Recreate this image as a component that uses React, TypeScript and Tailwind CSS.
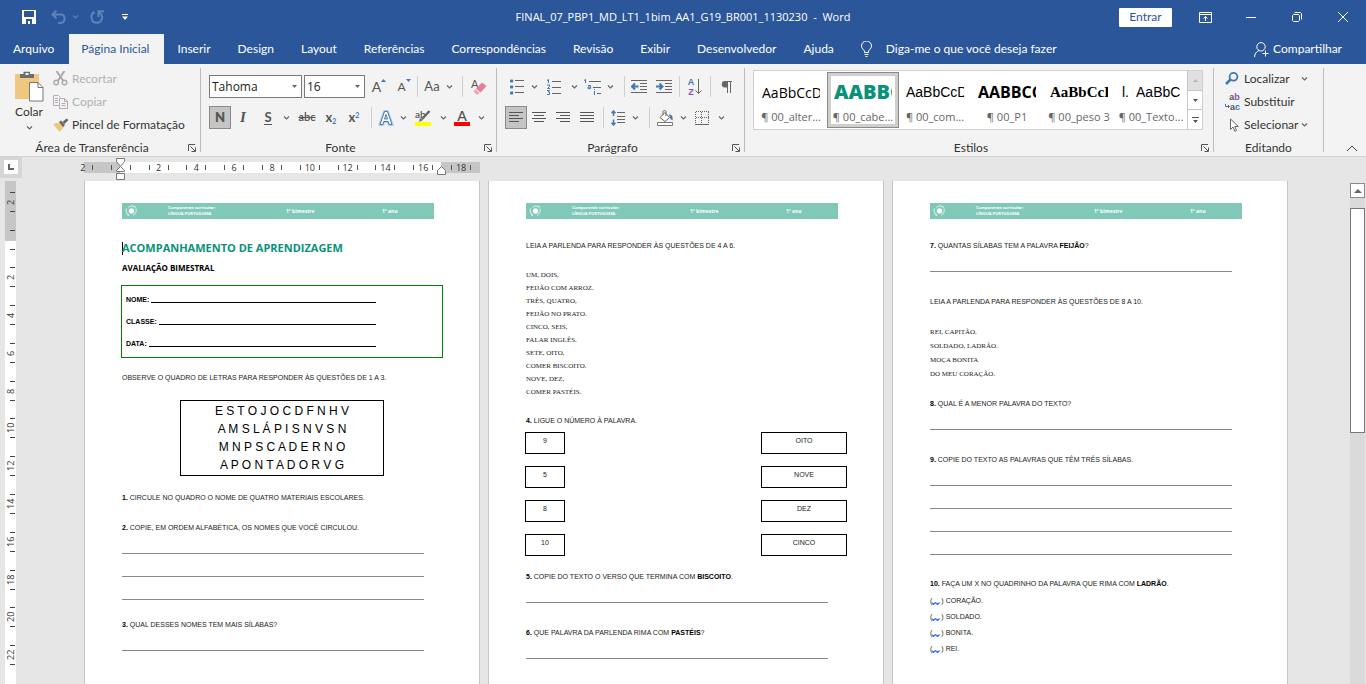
import type { ReactNode } from 'react';
import { clsx } from 'clsx';

const TABS = [
  'Arquivo',
  'Página Inicial',
  'Inserir',
  'Design',
  'Layout',
  'Referências',
  'Correspondências',
  'Revisão',
  'Exibir',
  'Desenvolvedor',
  'Ajuda',
];

const STYLES = [
  { name: '¶ 00_alter...', sample: 'AaBbCcDd', font: "font-['Open_Sans'] text-[14px] text-black" },
  { name: '¶ 00_cabe...', sample: 'AABBC', font: "font-['Open_Sans'] text-[20px] font-extrabold text-[#0a9278]", active: true },
  { name: '¶ 00_com...', sample: 'AaBbCcDd', font: "font-['Liberation_Sans'] text-[14px] text-black" },
  { name: '¶ 00_P1', sample: 'AABBCC', font: "font-['Open_Sans'] text-[16px] font-bold text-black" },
  { name: '¶ 00_peso 3', sample: 'AaBbCcDd', font: "font-['Liberation_Serif'] text-[15px] font-bold text-black" },
  { name: '¶ 00_Texto...', sample: 'l.  AaBbCc', font: "font-['Liberation_Sans'] text-[14px] text-black" },
];

const H_RULER = [-2, 0, 2, 4, 6, 8, 10, 12, 14, 16, 18];
const V_RULER = [-2, 0, 2, 4, 6, 8, 10, 12, 14, 16, 18, 20, 22];

/* ---------- small shared pieces ---------- */

function Chevron({ className = 'text-[#666]' }: { className?: string }) {
  return (
    <svg width="7" height="4" viewBox="0 0 7 4" fill="none" stroke="currentColor" className={className}>
      <path d="M1 .5 3.5 3 6 .5" strokeWidth="1.2" />
    </svg>
  );
}

function ChevronButton({ label }: { label: string }) {
  return (
    <button aria-label={label} className="grid h-[23px] w-[10px] place-items-center">
      <Chevron />
    </button>
  );
}

function Tool({ label, width, active, children }: { label: string; width: string; active?: boolean; children: ReactNode }) {
  return (
    <button
      aria-label={label}
      className={clsx(
        'grid h-[23px] shrink-0 place-items-center text-[#555]',
        width,
        active && 'border border-[#8a8a8a] bg-[#c5c5c5]',
      )}
    >
      {children}
    </button>
  );
}

function Sep({ className }: { className?: string }) {
  return <div className={clsx('mx-[2px] h-[21px] w-px shrink-0 bg-[#cfcfcf]', className)} />;
}

function GroupDivider() {
  return <div className="my-1 w-px shrink-0 bg-[#bdbdbd]" />;
}

function Launcher() {
  return (
    <button aria-label="Mais opções" className="absolute right-1 top-[4px]">
      <svg width="8" height="8" viewBox="0 0 8 8" fill="none" stroke="#555">
        <path d="M.5 7V.5H7M2.5 2.5 7 7M7.5 3.5v4h-4" />
      </svg>
    </button>
  );
}

function Group({ title, className, launcher, children }: { title: string; className: string; launcher?: boolean; children: ReactNode }) {
  return (
    <section className={clsx('flex flex-col', className)}>
      <div className="flex-1">{children}</div>
      <div className={clsx('relative h-4 text-center leading-4 text-[#333]', launcher && 'pr-4')}>
        {title}
        {launcher && <Launcher />}
      </div>
    </section>
  );
}

function Combo({ label, value, width }: { label: string; value: string; width: string }) {
  return (
    <div className={clsx('relative', width)}>
      <select
        aria-label={label}
        className="h-[23px] w-full appearance-none border border-[#7a7a7a] bg-white pl-[2px] font-['Open_Sans'] text-[12px] text-[#222]"
      >
        <option>{value}</option>
      </select>
      <svg width="5" height="3" viewBox="0 0 5 3" className="pointer-events-none absolute right-[5px] top-[10px]">
        <path d="M0 0h5L2.5 3z" fill="#666" />
      </svg>
    </div>
  );
}

/* ---------- icons ---------- */

function AlignIcon({ rows }: { rows: [number, number][] }) {
  return (
    <svg width="14" height="12" viewBox="0 0 14 12" stroke="#555" shapeRendering="crispEdges">
      {rows.map(([a, b], i) => (
        <path key={i} d={`M${a} ${i * 3 + 0.5}H${b}`} />
      ))}
    </svg>
  );
}

function BulletsIcon() {
  return (
    <svg width="14" height="16" viewBox="0 0 14 16">
      {[2, 8, 14].map((y) => (
        <g key={y}>
          <rect x="0" y={y - 1.5} width="3.2" height="3" rx="1" fill="#3f78b5" />
          <path d={`M5 ${y - 0.5}h9`} stroke="#666" />
        </g>
      ))}
    </svg>
  );
}

function NumbersIcon() {
  return (
    <svg width="14" height="16" viewBox="0 0 14 16" fill="none">
      <path d="M5 2.5h9M5 8.5h9M5 14.5h9" stroke="#666" />
      <path d="M0 1.5 1.5.5V4M0 6h2.5v1.5L.5 9.5H3M0 11.5h2.5L1.2 13H2.5v2.5H0" stroke="#3f78b5" />
    </svg>
  );
}

function MultilevelIcon() {
  return (
    <svg width="17" height="16" viewBox="0 0 17 16" fill="none">
      <path d="M5 2.5h12M9 8.5h8M13 14.5h4" stroke="#666" />
      <path d="M0 1.5 1.5.5V4M4 6.5h2.5v3.2H4V8h2.5M10.5 12v4M10.5 10v1" stroke="#3f78b5" />
    </svg>
  );
}

function IndentIcon({ outdent }: { outdent?: boolean }) {
  return (
    <svg width="16" height="13" viewBox="0 0 16 13" fill="none">
      <path d="M0 .5h16M9 3.5h7M9 6.5h7M9 9.5h7M0 12.5h16" stroke="#666" />
      <path d={outdent ? 'M7.5 6.5H1M4 3.5l-3 3 3 3' : 'M0 6.5h6.5M3.5 3.5l3 3-3 3'} stroke="#3f78b5" strokeWidth="2" />
    </svg>
  );
}

function SortIcon() {
  return (
    <span className="flex items-center gap-px font-['Liberation_Sans']">
      <span className="flex flex-col text-[9px] leading-[10px] font-bold">
        <span className="text-[#3f78b5]">A</span>
        <span className="text-[#8a4fb0]">Z</span>
      </span>
      <svg width="7" height="16" viewBox="0 0 7 16" fill="none" stroke="#666">
        <path d="M3.5 0v14.5M.5 11.5l3 3 3-3" />
      </svg>
    </span>
  );
}

function SpacingIcon() {
  return (
    <svg width="14" height="16" viewBox="0 0 14 16" fill="none">
      <path d="M6 2.5h8M6 6.5h8M6 9.5h8M6 12.5h8" stroke="#666" />
      <path d="M2.5 1v5M.5 3.2l2-2.2 2 2.2M2.5 9.5V15M.5 12.8l2 2.2 2-2.2" stroke="#3f78b5" strokeWidth="1.5" />
    </svg>
  );
}

function FillIcon() {
  return (
    <svg width="17" height="16" viewBox="0 0 17 16" fill="none">
      <path d="M3 7.5 8 2.5l4.5 5L8 11.5z" fill="#fff" stroke="#666" />
      <path d="M6 5V1.5C6 .3 9 .3 9 1.5V6" stroke="#666" />
      <path d="M12 4.5c3 0 4 2 3.5 6l-2-1.5z" fill="#3f78b5" />
      <path d="M.5 12.5h15v3H.5z" fill="#fff" stroke="#777" />
    </svg>
  );
}

function BorderIcon() {
  return (
    <svg width="14" height="14" viewBox="0 0 14 14" fill="none" stroke="#666" shapeRendering="crispEdges">
      <path d="M.5.5h13M.5.5v12M6.5.5v12M13.5.5v12M.5 6.5h13" strokeDasharray="1 1" />
      <path d="M0 13.5h14" />
    </svg>
  );
}

function EraserIcon() {
  return (
    <span className="relative block h-4 w-4">
      <span className="absolute left-0 top-0 text-[11px] leading-[10px] text-[#555]">A</span>
      <svg width="16" height="16" viewBox="0 0 16 16" className="absolute inset-0">
        <path d="M11 3.5 15.5 7 9.5 13.5 5 9.5z" fill="#e77f97" />
        <path d="M4.5 10.2 8.5 14 7 15.5H5.5L2.5 12.5z" fill="#eca5b5" />
      </svg>
    </span>
  );
}

function PasteIcon() {
  return (
    <svg width="29" height="31" viewBox="0 0 29 31" fill="none">
      <path d="M0 3h24v25H0z" fill="#efc77e" />
      <path d="M5 3h3.5V.8h6.5V3H19v4H5z" fill="#6d6d6d" />
      <path d="M10.5 2h3v2h-3z" fill="#f3f3f3" />
      <path d="M14.5 11.5h8.5l5 5v13.5h-13.5z" fill="#fff" stroke="#777" />
      <path d="M23 11.5v5h5" stroke="#777" />
    </svg>
  );
}

function CutIcon() {
  return (
    <svg width="15" height="15" viewBox="0 0 15 15" fill="none" stroke="#aaa">
      <path d="M3.5 0 10 9.5M11.5 0 5 9.5" strokeWidth="2" />
      <circle cx="3.2" cy="11.5" r="2.3" strokeWidth="1.4" />
      <circle cx="11.5" cy="11.5" r="2.3" strokeWidth="1.4" />
    </svg>
  );
}

function CopyIcon() {
  return (
    <svg width="15" height="14" viewBox="0 0 15 14" fill="none" stroke="#b5aab5">
      <path d="M6 10.5H.5V.5h5l2 2M2 3.5h3M2 5.5h3M2 7.5h3" />
      <path d="M6.5 3.5h5l3 3v7h-8zM11.5 3.5v3h3M8.5 8.5h4M8.5 10.5h4" fill="#f3f3f3" />
    </svg>
  );
}

function BrushIcon() {
  return (
    <svg width="16" height="14" viewBox="0 0 16 14">
      <path d="M0 6 6 4.5 11 9 6.5 14z" fill="#efc77e" />
      <path d="M6 4 8 2.5 12 7l-2 2z" fill="#666" />
      <path d="M9.5 4 13.5.5 15.5 2l-4 4z" fill="#666" />
    </svg>
  );
}

/* ---------- window chrome ---------- */

function TitleBar() {
  return (
    <header className="grid h-[34px] grid-cols-[1fr_auto_1fr] items-center">
      <div className="flex items-center pl-[22px]">
        <button aria-label="Salvar">
          <svg width="14" height="14" viewBox="0 0 14 14">
            <path d="M0 0h14v14H0z" fill="#fff" />
            <path d="M2 1h10v6H2zM4 9h6v5H8v-3H6v3H4z" fill="#2b579a" />
          </svg>
        </button>
        <button aria-label="Desfazer" className="ml-[15px] text-[#5f82b8]">
          <svg width="15" height="14" viewBox="0 0 15 14" fill="none" stroke="currentColor" strokeWidth="2">
            <path d="M5.5.5 1.5 4.5l4 4M2 4.5h7.5c5.5 0 5.5 8 0 8.5H7" />
          </svg>
        </button>
        <button aria-label="Opções de desfazer" className="ml-[6px]">
          <Chevron className="text-[#5f82b8]" />
        </button>
        <button aria-label="Refazer" className="ml-[11px] text-[#5f82b8]">
          <svg width="14" height="14" viewBox="0 0 14 14" fill="none" stroke="currentColor" strokeWidth="2">
            <path d="M4.5 2C-.5 4.5.8 12.5 6.5 12.8 12.5 12.8 14 5.5 9.5 2.5M8.5 7V1.2H14" />
          </svg>
        </button>
        <button aria-label="Personalizar barra" className="ml-[18px]">
          <svg width="6" height="6" viewBox="0 0 6 6" fill="#fff">
            <path d="M0 0h6v1H0zM0 2.5h6L3 6z" />
          </svg>
        </button>
      </div>
      <h1 className="whitespace-pre font-['Open_Sans'] text-[11px]">FINAL_07_PBP1_MD_LT1_1bim_AA1_G19_BR001_1130230  -  Word</h1>
      <div className="flex items-center justify-end">
        <button className="mr-[10px] h-[19px] w-[53px] rounded-[1px] bg-white text-[#2b579a]">Entrar</button>
        <button aria-label="Opções da faixa" className="grid w-[46px] place-items-center">
          <svg width="13" height="11" viewBox="0 0 13 11" fill="none" stroke="#fff">
            <path d="M.5.5h12v10H.5zM.5 2.5h12M6.5 9V4.5M4.5 6.5l2-2 2 2" />
          </svg>
        </button>
        <button aria-label="Minimizar" className="grid w-[46px] place-items-center">
          <svg width="10" height="1" viewBox="0 0 10 1"><path d="M0 0h10v1H0z" fill="#fff" /></svg>
        </button>
        <button aria-label="Restaurar" className="grid w-[46px] place-items-center">
          <svg width="10" height="10" viewBox="0 0 10 10" fill="none" stroke="#fff">
            <path d="M1.5 2.5h5l1 1v5l-1 1h-5l-1-1v-5zM2.5.5h6l1 1v6" />
          </svg>
        </button>
        <button aria-label="Fechar" className="grid w-[46px] place-items-center">
          <svg width="10" height="10" viewBox="0 0 10 10" stroke="#fff"><path d="m0 0 10 10M10 0 0 10" /></svg>
        </button>
      </div>
    </header>
  );
}

function TabBar() {
  return (
    <nav className="flex h-[30px] items-stretch">
      {TABS.map((tab, i) => (
        <button
          key={tab}
          className={clsx(
            'whitespace-nowrap',
            i === 0 && 'pl-[13px] pr-[15px]',
            i === 1 && 'bg-[#f3f3f3] pl-3 pr-[15px] text-[#2b579a]',
            i === 2 && 'px-[13px]',
            i > 2 && 'pl-[14px] pr-[13px]',
          )}
        >
          {tab}
        </button>
      ))}
      <button className="ml-[14px] flex items-center gap-[14px]">
        <svg width="11" height="16" viewBox="0 0 11 16" fill="none" stroke="#fff">
          <path d="M3.5 11.5V10C2.5 8.5.5 7.5.5 5a5 5 0 0 1 10 0c0 2.5-2 3.5-3 5v1.5zM3.5 13.5h4M4.5 15.5h2" />
        </svg>
        Diga-me o que você deseja fazer
      </button>
      <button className="ml-auto mr-6 flex items-center gap-1">
        <svg width="15" height="15" viewBox="0 0 15 15" fill="none" stroke="#fff">
          <circle cx="7" cy="4.8" r="4.2" />
          <path d="M.5 15c0-3 2-5.500 4.500-6.500M11.500 8.500v6M8.500 11.500h6" />
        </svg>
        Compartilhar
      </button>
    </nav>
  );
}

function ClipboardGroup() {
  const items = [
    { label: 'Recortar', icon: <CutIcon />, disabled: true },
    { label: 'Copiar', icon: <CopyIcon />, disabled: true },
    { label: 'Pincel de Formatação', icon: <BrushIcon /> },
  ];
  return (
    <Group title="Área de Transferência" launcher className="w-[200px] shrink-0">
      <div className="flex pl-[10px] pt-[3px]">
        <button className="flex w-[38px] flex-col items-center pt-1">
          <PasteIcon />
          <span className="leading-5">Colar</span>
          <span className="mt-1"><Chevron /></span>
        </button>
        <div className="pl-[5px]">
          {items.map((item) => (
            <button
              key={item.label}
              disabled={item.disabled}
              className="flex h-[23px] items-center whitespace-nowrap disabled:text-[#b1b1b1]"
            >
              <span className="w-[19px]">{item.icon}</span>
              {item.label}
            </button>
          ))}
        </div>
      </div>
    </Group>
  );
}

function FontGroup() {
  return (
    <Group title="Fonte" launcher className="w-[295px] shrink-0">
      <div className="flex flex-col gap-2 pl-2 pt-[11px]">
        <div className="flex items-center">
          <Combo label="Fonte" value="Tahoma" width="w-[93px]" />
          <Combo label="Tamanho" value="16" width="ml-[2px] w-[61px]" />
          <Tool label="Aumentar fonte" width="w-[28px]">
            <span className="flex text-[14px] leading-4">A<svg width="5" height="4" viewBox="0 0 5 4"><path d="M0 3h5L2.5 0z" fill="#3f78b5" /></svg></span>
          </Tool>
          <Tool label="Diminuir fonte" width="w-[22px]">
            <span className="flex text-[12px] leading-4">A<svg width="5" height="4" viewBox="0 0 5 4"><path d="M0 0h5L2.5 3z" fill="#3f78b5" /></svg></span>
          </Tool>
          <Sep />
          <Tool label="Maiúsculas e minúsculas" width="w-[24px]"><span className="text-[13px]">Aa</span></Tool>
          <ChevronButton label="Opções de maiúsculas" />
          <Sep className="ml-2" />
          <Tool label="Limpar formatação" width="w-[28px]"><EraserIcon /></Tool>
        </div>
        <div className="flex items-center">
          <Tool label="Negrito" width="w-[22px]" active><b className="text-[13px] font-extrabold">N</b></Tool>
          <Tool label="Itálico" width="w-[24px]"><i className="font-['Liberation_Serif'] text-[15px] font-bold">I</i></Tool>
          <Tool label="Sublinhado" width="w-[26px]"><b className="border-b border-[#555] text-[13px] leading-[13px]">S</b></Tool>
          <ChevronButton label="Opções de sublinhado" />
          <Tool label="Tachado" width="w-[32px]"><span className="text-[11px] font-semibold line-through">abc</span></Tool>
          <Tool label="Subscrito" width="w-[16px]"><b className="text-[13px]">x<sub className="text-[7px] text-[#3f78b5]">2</sub></b></Tool>
          <Tool label="Sobrescrito" width="w-[30px]"><b className="text-[13px]">x<sup className="text-[7px] text-[#3f78b5]">2</sup></b></Tool>
          <Sep />
          <Tool label="Efeitos de texto" width="w-[24px]">
            <svg width="16" height="16" viewBox="0 0 16 16" fill="none">
              <path d="M2 14.5 6.5 1.5h3l4.5 13h-2.8l-1-3H5.8l-1 3z" stroke="#b4d0ec" strokeWidth="3" />
              <path d="M2 14.5 6.5 1.5h3l4.5 13h-2.8l-1-3H5.8l-1 3zM6.5 9h3L8 4.5z" fill="#fff" stroke="#3f78b5" />
            </svg>
          </Tool>
          <ChevronButton label="Opções de efeitos" />
          <Tool label="Realce" width="w-[30px]">
            <span className="relative block h-4 w-4 border-b-4 border-[#ff0]">
              <span className="absolute left-0 top-0 text-[10px] leading-[8px] font-semibold">ab</span>
              <svg width="16" height="13" viewBox="0 0 16 13" className="absolute left-0 top-0">
                <path d="M14.5 1 7 9" stroke="#666" strokeWidth="2.5" />
                <path d="m5 8 3 2-4 2z" fill="#666" />
              </svg>
            </span>
          </Tool>
          <ChevronButton label="Cores de realce" />
          <Tool label="Cor da fonte" width="w-[28px]">
            <span className="block h-4 w-4 border-b-4 border-[#f00] text-center text-[14px] leading-[12px] font-semibold">A</span>
          </Tool>
          <ChevronButton label="Cores da fonte" />
        </div>
      </div>
    </Group>
  );
}

function ParagraphGroup() {
  return (
    <Group title="Parágrafo" launcher className="w-[247px] shrink-0">
      <div className="flex flex-col gap-2 pl-2 pt-[11px]">
        <div className="flex items-center">
          <Tool label="Marcadores" width="w-[24px]"><BulletsIcon /></Tool>
          <ChevronButton label="Biblioteca de marcadores" />
          <Tool label="Numeração" width="w-[30px]"><NumbersIcon /></Tool>
          <ChevronButton label="Biblioteca de numeração" />
          <Tool label="Lista de vários níveis" width="w-[26px]"><MultilevelIcon /></Tool>
          <ChevronButton label="Biblioteca de listas" />
          <Sep className="ml-[9px]" />
          <Tool label="Diminuir recuo" width="w-[24px]"><IndentIcon outdent /></Tool>
          <Tool label="Aumentar recuo" width="w-[26px]"><IndentIcon /></Tool>
          <Sep />
          <Tool label="Classificar" width="w-[26px]"><SortIcon /></Tool>
          <Sep />
          <Tool label="Mostrar tudo" width="w-[26px]">
            <svg width="11" height="12" viewBox="0 0 11 12" fill="none" stroke="#666">
              <path d="M4 .5h7M6.5 0v12M9.5 0v12" />
              <path d="M6 0H4a3 3 0 0 0 0 6.5h2z" fill="#666" stroke="none" />
            </svg>
          </Tool>
        </div>
        <div className="flex items-center">
          <Tool label="Alinhar à esquerda" width="w-[22px]" active><AlignIcon rows={[[0, 14], [0, 10], [0, 14], [0, 10]]} /></Tool>
          <Tool label="Centralizar" width="w-[24px]"><AlignIcon rows={[[0, 14], [2, 12], [0, 14], [2, 12]]} /></Tool>
          <Tool label="Alinhar à direita" width="w-[24px]"><AlignIcon rows={[[0, 14], [4, 14], [0, 14], [4, 14]]} /></Tool>
          <Tool label="Justificar" width="w-[24px]"><AlignIcon rows={[[0, 14], [0, 14], [0, 14], [0, 14]]} /></Tool>
          <Sep className="ml-1" />
          <Tool label="Espaçamento" width="w-[24px]"><SpacingIcon /></Tool>
          <ChevronButton label="Opções de espaçamento" />
          <Sep className="ml-[9px]" />
          <Tool label="Sombreamento" width="w-[26px]"><FillIcon /></Tool>
          <ChevronButton label="Cores de sombreamento" />
          <Tool label="Bordas" width="w-[28px]"><BorderIcon /></Tool>
          <ChevronButton label="Opções de bordas" />
        </div>
      </div>
    </Group>
  );
}

function StylesGroup() {
  return (
    <Group title="Estilos" launcher className="min-w-0 flex-1">
      <div className="ml-2 mr-[10px] mt-[6px] flex h-[60px] border border-[#d0d0d0] bg-white">
        <div className="flex flex-1 overflow-hidden p-px">
          {STYLES.map((style) => (
            <button
              key={style.name}
              className={clsx(
                'flex w-[72px] shrink-0 flex-col items-center border',
                style.active ? 'border-[#8a8a8a] shadow-[inset_0_0_0_3px_#cfcfcc]' : 'border-transparent',
              )}
            >
              <span className={clsx('flex h-[38px] w-[58px] items-center overflow-hidden whitespace-pre', style.font)}>
                {style.sample}
              </span>
              <span className="whitespace-nowrap font-['Open_Sans'] text-[11px] leading-3 text-[#666]">{style.name}</span>
            </button>
          ))}
        </div>
        <div className="flex w-[15px] flex-col border-l border-[#c6c6c6]">
          <button aria-label="Linha anterior" className="grid flex-1 place-items-center bg-[#e0e0e0]">
            <svg width="5" height="3" viewBox="0 0 5 3"><path d="M0 3h5L2.5 0z" fill="#b5b5b5" /></svg>
          </button>
          <button aria-label="Próxima linha" className="grid flex-1 place-items-center border-y border-[#c6c6c6]">
            <svg width="5" height="3" viewBox="0 0 5 3"><path d="M0 0h5L2.5 3z" fill="#555" /></svg>
          </button>
          <button aria-label="Mais estilos" className="grid flex-1 place-items-center">
            <svg width="7" height="6" viewBox="0 0 7 6" fill="#555"><path d="M0 0h7v1H0zM1 3h5L3.5 6z" /></svg>
          </button>
        </div>
      </div>
    </Group>
  );
}

function EditGroup() {
  return (
    <Group title="Editando" className="w-[109px] shrink-0">
      <div className="flex flex-col pl-[11px] pt-[3px]">
        <button className="flex h-[23px] items-center">
          <span className="w-[19px]">
            <svg width="14" height="13" viewBox="0 0 14 13" fill="none" stroke="#3f78b5">
              <circle cx="8.5" cy="4.8" r="3.9" strokeWidth="1.8" />
              <path d="M5.5 7.5 1 12" strokeWidth="2.5" />
            </svg>
          </span>
          Localizar
          <span className="ml-[11px]"><Chevron /></span>
        </button>
        <button className="flex h-[23px] items-center">
          <span className="flex w-[19px] flex-col font-['Liberation_Sans'] text-[9px] leading-[10px] font-bold text-[#555]">
            <span>a<span className="text-[#8a4fb0]">b</span></span>
            <span className="flex items-center">
              <svg width="5" height="5" viewBox="0 0 5 5" fill="none" stroke="#3f78b5"><path d="M.5 0v2.5h4M3 1l1.5 1.5L3 4" /></svg>
              a<span className="text-[#3f78b5]">c</span>
            </span>
          </span>
          Substituir
        </button>
        <button className="flex h-[23px] items-center">
          <span className="flex w-[19px] justify-center">
            <svg width="9" height="14" viewBox="0 0 9 14" fill="#fff" stroke="#666">
              <path d="M.5 1v10.5L3 9l1.8 4.3 1.7-.8L4.8 8.5h3.5z" />
            </svg>
          </span>
          Selecionar
          <span className="ml-[3px]"><Chevron /></span>
        </button>
      </div>
    </Group>
  );
}

function Ribbon() {
  return (
    <div className="flex h-[93px] shrink-0 border-b border-[#d2d2d2] bg-[#f3f3f3] text-[#333]">
      <ClipboardGroup />
      <GroupDivider />
      <FontGroup />
      <GroupDivider />
      <ParagraphGroup />
      <GroupDivider />
      <StylesGroup />
      <GroupDivider />
      <EditGroup />
      <GroupDivider />
      <div className="flex w-[42px] shrink-0 items-end justify-end pb-1 pr-2">
        <button aria-label="Recolher faixa">
          <svg width="12" height="7" viewBox="0 0 12 7" fill="none" stroke="#444"><path d="M1 6l5-5 5 5" /></svg>
        </button>
      </div>
    </div>
  );
}

/* ---------- rulers and scrollbar ---------- */

function HorizontalRuler() {
  return (
    <div className="relative flex h-[11px] w-[396px]">
      <div className="w-9 bg-[#c6c6c6]" />
      <div className="flex-1 bg-white" />
      <div className="w-[39px] bg-[#c6c6c6]" />
      <div className="absolute right-0 top-0 flex h-[11px] w-[416px] font-['Open_Sans'] text-[9px] text-[#333]">
        {H_RULER.map((n) => (
          <div key={n} className="flex flex-1 items-center justify-center">
            <span className={clsx('h-[5px] w-px', n !== -2 && 'bg-[#555]')} />
            <span className="w-[18px] text-center leading-[11px]">{n === 0 ? '' : Math.abs(n)}</span>
            <span className="h-[5px] w-px bg-[#555]" />
          </div>
        ))}
      </div>
      <svg width="11" height="23" viewBox="0 0 11 23" fill="#fff" stroke="#777" className="absolute -top-[4px] left-[31px]">
        <path d="M1.5.5h8v3l-4 5-4-5zM1.5 13.5v-1l4-4 4 4v1zM1.5 15.5h8v6h-8z" />
      </svg>
      <svg width="9" height="9" viewBox="0 0 9 9" fill="#fff" stroke="#777" className="absolute left-[353px] top-[4px]">
        <path d="M.5 8.5v-4l4-4 4 4v4z" />
      </svg>
    </div>
  );
}

function VerticalRuler() {
  return (
    <div className="w-[22px] shrink-0 pl-[5px]">
      <div className="relative flex h-full w-[11px] flex-col">
        <div className="h-[60px] bg-[#c6c6c6]" />
        <div className="flex-1 bg-white" />
        <div className="absolute left-0 top-[2px] flex h-[491px] w-[11px] flex-col font-['Open_Sans'] text-[9px] text-[#333]">
          {V_RULER.map((n) => (
            <div key={n} className="flex flex-1 flex-col items-center justify-center">
              <span className="ml-1 h-px w-[5px] bg-[#444]" />
              <span className="grid h-[18px] rotate-180 place-items-center leading-[11px] [writing-mode:vertical-rl]">
                {n === 0 ? '' : Math.abs(n)}
              </span>
              <span className="ml-1 h-px w-[5px] bg-[#444]" />
            </div>
          ))}
        </div>
      </div>
    </div>
  );
}

function ScrollBar() {
  return (
    <div className="flex w-4 shrink-0 flex-col pr-px pt-[2px]">
      <button aria-label="Rolar para cima" className="grid h-[15px] shrink-0 place-items-center border border-[#8a8a8a] bg-white">
        <svg width="8" height="4" viewBox="0 0 8 4"><path d="M0 4h8L4 0z" fill="#666" /></svg>
      </button>
      <div className="flex-1 bg-[#dadada] pt-[10px]">
        <div className="h-[225px] border border-[#777] bg-white" />
      </div>
    </div>
  );
}

/* ---------- document ---------- */

function Page({ children }: { children: ReactNode }) {
  return (
    <article className="w-[396px] shrink-0 border-x border-[#c6c6c6] bg-white pl-[37px] pt-[22px] font-['Liberation_Sans'] text-[7px] leading-[12px] text-[#222]">
      <div className="flex h-4 w-[312px] items-center bg-[#80c9b9] font-['Open_Sans'] text-[5px] font-bold text-white">
        <svg width="12" height="12" viewBox="0 0 12 12" fill="none" stroke="#fff" className="ml-[3px]">
          <circle cx="6.5" cy="6" r="2.3" fill="#fff" />
          <path d="M1.5 3.5C.5 6 1.5 9 4 10M3.5 2.5C5 .5 8 .5 9.5 2M11 3.5c.8 3-.5 5.5-3 7M2 9.5l2 1.5M9 .8 11 2.5" strokeWidth=".8" />
        </svg>
        <div className="ml-[31px] w-[118px] text-[4px] leading-[6px]">
          <p>Componente curricular:</p>
          <p>LÍNGUA PORTUGUESA</p>
        </div>
        <p className="w-24">1º bimestre</p>
        <p>1º ano</p>
      </div>
      {children}
    </article>
  );
}

function Question({ n, className, children }: { n: number; className: string; children: ReactNode }) {
  return (
    <p className={className}>
      <b className="text-black">{n}.</b> {children}
    </p>
  );
}

function AnswerLines({ count = 1 }: { count?: number }) {
  return (
    <div className="mt-[19px] flex flex-col gap-[22px]">
      {Array.from({ length: count }).map((_, i) => (
        <div key={i} className="h-px w-[302px] bg-[#888]" />
      ))}
    </div>
  );
}

function PageOne() {
  return (
    <Page>
      <h2 className="mt-[21px] flex items-center font-['Open_Sans'] text-[11px] leading-4 font-bold text-[#0a9278]">
        <span className="-mr-px h-[13px] w-px bg-black" />
        ACOMPANHAMENTO DE APRENDIZAGEM
      </h2>
      <h3 className="mt-[6px] font-['Open_Sans'] text-[8px] leading-3 font-bold text-black">AVALIAÇÃO BIMESTRAL</h3>
      <div className="-ml-px mt-[11px] h-[73px] w-[322px] border border-[#008000] pl-1 pt-[3px] font-bold text-black">
        {['NOME:', 'CLASSE:', 'DATA:'].map((field) => (
          <div key={field} className="flex h-[22px] w-[250px] items-center gap-[2px]">
            {field}
            <span className="h-[6px] flex-1 border-b border-black" />
          </div>
        ))}
      </div>
      <p className="mt-[14px]">OBSERVE O QUADRO DE LETRAS PARA RESPONDER ÀS QUESTÕES DE 1 A 3.</p>
      <div className="ml-[58px] mt-4 h-[76px] w-[204px] border border-black pt-px text-center text-[12px] leading-[18px] text-black">
        <p>E S T O J O C D F N H V</p>
        <p>A M S L Á P I S N V S N</p>
        <p>M N P S C A D E R N O</p>
        <p>A P O N T A D O R V G</p>
      </div>
      <Question n={1} className="mt-4">CIRCULE NO QUADRO O NOME DE QUATRO MATERIAIS ESCOLARES.</Question>
      <Question n={2} className="mt-[18px]">COPIE, EM ORDEM ALFABÉTICA, OS NOMES QUE VOCÊ CIRCULOU.</Question>
      <AnswerLines count={3} />
      <Question n={3} className="mt-[19px]">QUAL DESSES NOMES TEM MAIS SÍLABAS?</Question>
      <AnswerLines />
    </Page>
  );
}

function PageTwo() {
  const poem = [
    'UM, DOIS,',
    'FEIJÃO COM ARROZ.',
    'TRÊS, QUATRO,',
    'FEIJÃO NO PRATO.',
    'CINCO, SEIS,',
    'FALAR INGLÊS.',
    'SETE, OITO,',
    'COMER BISCOITO.',
    'NOVE, DEZ,',
    'COMER PASTÉIS.',
  ];
  const pairs = [
    ['9', 'OITO'],
    ['5', 'NOVE'],
    ['8', 'DEZ'],
    ['10', 'CINCO'],
  ];
  return (
    <Page>
      <p className="mt-[21px]">LEIA A PARLENDA PARA RESPONDER ÀS QUESTÕES DE 4 A 6.</p>
      <div className="mt-[17px] font-['Liberation_Serif'] leading-[13px]">
        {poem.map((line) => (
          <p key={line}>{line}</p>
        ))}
      </div>
      <Question n={4} className="mt-4">LIGUE O NÚMERO À PALAVRA.</Question>
      <div className="-ml-px mt-[5px] flex w-[322px] flex-col gap-3 text-center">
        {pairs.map(([num, word]) => (
          <div key={num} className="flex justify-between">
            <span className="h-[22px] w-10 border border-black pt-[2px]">{num}</span>
            <span className="h-[22px] w-[86px] border border-black pt-[2px]">{word}</span>
          </div>
        ))}
      </div>
      <Question n={5} className="mt-[15px]">
        COPIE DO TEXTO O VERSO QUE TERMINA COM <b className="text-black">BISCOITO</b>.
      </Question>
      <AnswerLines />
      <Question n={6} className="mt-6">
        QUE PALAVRA DA PARLENDA RIMA COM <b className="text-black">PASTÉIS</b>?
      </Question>
      <AnswerLines />
    </Page>
  );
}

function PageThree() {
  return (
    <Page>
      <Question n={7} className="mt-[21px]">
        QUANTAS SÍLABAS TEM A PALAVRA <b className="text-black">FEIJÃO</b>?
      </Question>
      <AnswerLines />
      <p className="mt-6">LEIA A PARLENDA PARA RESPONDER ÀS QUESTÕES DE 8 A 10.</p>
      <div className="mt-[17px] font-['Liberation_Serif'] leading-[14px]">
        <p>REI, CAPITÃO.</p>
        <p>SOLDADO, LADRÃO.</p>
        <p>MOÇA BONITA</p>
        <p>DO MEU CORAÇÃO.</p>
      </div>
      <Question n={8} className="mt-[17px]">QUAL É A MENOR PALAVRA DO TEXTO?</Question>
      <AnswerLines />
      <Question n={9} className="mt-6">COPIE DO TEXTO AS PALAVRAS QUE TÊM TRÊS SÍLABAS.</Question>
      <AnswerLines count={4} />
      <Question n={10} className="mt-[23px]">
        FAÇA UM X NO QUADRINHO DA PALAVRA QUE RIMA COM <b className="text-black">LADRÃO</b>.
      </Question>
      <ul className="mt-[3px] leading-4">
        {['CORAÇÃO.', 'SOLDADO.', 'BONITA.', 'REI.'].map((word) => (
          <li key={word} className="flex items-center">
            (
            <svg width="8" height="3" viewBox="0 0 8 3" fill="none" stroke="#2f6fe0" strokeWidth="1.2" className="mt-1">
              <path d="M0 .5 1.5 2.5 3.5.5 5.5 2.5 7.5.5" />
            </svg>
            <span className="ml-px">) {word}</span>
          </li>
        ))}
      </ul>
    </Page>
  );
}

export default function App() {
  return (
    <div className="flex h-screen flex-col overflow-hidden bg-[#e6e6e6] font-['Lato','Open_Sans',sans-serif] text-[12px]">
      <div className="shrink-0 bg-[#2b579a] text-white">
        <TitleBar />
        <TabBar />
      </div>
      <Ribbon />
      <div className="flex h-6 shrink-0 pr-4">
        <div className="h-[21px] w-[22px] shrink-0 bg-[#d6d6d6] pl-1 pt-[3px]">
          <div className="grid h-[14px] w-[14px] place-items-center bg-white">
            <span className="h-[6px] w-[6px] border-b-2 border-l-2 border-[#666]" />
          </div>
        </div>
        <div className="flex flex-1 justify-center pt-[5px]">
          <div className="w-[1204px] shrink-0">
            <HorizontalRuler />
          </div>
        </div>
      </div>
      <div className="flex min-h-0 flex-1">
        <VerticalRuler />
        <main className="flex flex-1 justify-center gap-2 overflow-hidden">
          <PageOne />
          <PageTwo />
          <PageThree />
        </main>
        <ScrollBar />
      </div>
    </div>
  );
}
